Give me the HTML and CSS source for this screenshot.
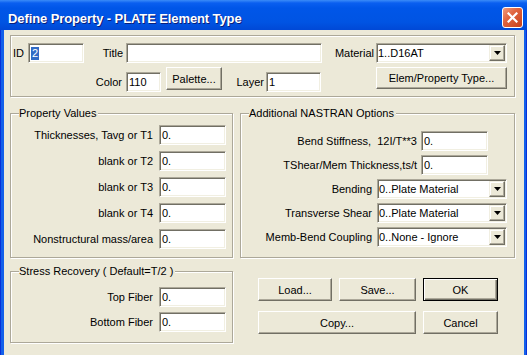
FILE: index.html
```html
<!DOCTYPE html>
<html lang="en">
<head>
    <meta charset="UTF-8">
    <title>Define Property - PLATE Element Type</title>
    <link rel="stylesheet" href="styles.css">
</head>
<body>
    <div class="window">
        <div class="titlebar">
            <span class="title">Define Property - PLATE Element Type</span>
            <span class="close">
                <svg width="11" height="11" viewBox="0 0 11 11">
                    <path d="M1.5 1.5 L9.5 9.5 M9.5 1.5 L1.5 9.5" stroke="#fff" stroke-width="2.2" stroke-linecap="square"/>
                </svg>
            </span>
        </div>

        <div class="client">
            <div class="group top-group">
                <div class="row">
                    <span class="lbl lbl-id">ID</span>
                    <div class="edit w-id"><span class="sel">2</span></div>
                    <span class="lbl lbl-title">Title</span>
                    <div class="edit w-title"></div>
                    <span class="lbl lbl-material">Material</span>
                    <div class="combo w-material">
                        <span class="combo-text">1..D16AT</span>
                        <span class="combo-btn"><svg width="7" height="4" viewBox="0 0 7 4"><path d="M0 0 H7 L3.5 4 Z" fill="#000"/></svg></span>
                    </div>
                </div>
                <div class="row row-2">
                    <span class="lbl lbl-color">Color</span>
                    <div class="edit w-color">110</div>
                    <button class="btn btn-palette">Palette...</button>
                    <span class="lbl lbl-layer">Layer</span>
                    <div class="edit w-layer">1</div>
                    <button class="btn btn-elem">Elem/Property Type...</button>
                </div>
            </div>

            <div class="middle">
                <div class="group props">
                    <span class="group-title">Property Values</span>
                    <div class="form-grid">
                        <span class="lbl">Thicknesses, Tavg or T1</span><div class="edit">0.</div>
                        <span class="lbl">blank or T2</span><div class="edit">0.</div>
                        <span class="lbl">blank or T3</span><div class="edit">0.</div>
                        <span class="lbl">blank or T4</span><div class="edit">0.</div>
                        <span class="lbl">Nonstructural mass/area</span><div class="edit">0.</div>
                    </div>
                </div>

                <div class="group nastran">
                    <span class="group-title">Additional NASTRAN Options</span>
                    <div class="opt-row opt-edit">
                        <span class="lbl">Bend Stiffness,&nbsp; 12I/T**3</span>
                        <div class="edit w-opt">0.</div>
                    </div>
                    <div class="opt-row opt-edit">
                        <span class="lbl">TShear/Mem Thickness,ts/t</span>
                        <div class="edit w-opt">0.</div>
                    </div>
                    <div class="opt-row">
                        <span class="lbl">Bending</span>
                        <div class="combo w-optcombo">
                            <span class="combo-text">0..Plate Material</span>
                            <span class="combo-btn"><svg width="7" height="4" viewBox="0 0 7 4"><path d="M0 0 H7 L3.5 4 Z" fill="#000"/></svg></span>
                        </div>
                    </div>
                    <div class="opt-row">
                        <span class="lbl">Transverse Shear</span>
                        <div class="combo w-optcombo">
                            <span class="combo-text">0..Plate Material</span>
                            <span class="combo-btn"><svg width="7" height="4" viewBox="0 0 7 4"><path d="M0 0 H7 L3.5 4 Z" fill="#000"/></svg></span>
                        </div>
                    </div>
                    <div class="opt-row">
                        <span class="lbl">Memb-Bend Coupling</span>
                        <div class="combo w-optcombo">
                            <span class="combo-text">0..None - Ignore</span>
                            <span class="combo-btn"><svg width="7" height="4" viewBox="0 0 7 4"><path d="M0 0 H7 L3.5 4 Z" fill="#000"/></svg></span>
                        </div>
                    </div>
                </div>
            </div>

            <div class="bottom">
                <div class="group stress">
                    <span class="group-title">Stress Recovery ( Default=T/2 )</span>
                    <div class="form-grid stress-grid">
                        <span class="lbl">Top Fiber</span><div class="edit">0.</div>
                        <span class="lbl">Bottom Fiber</span><div class="edit">0.</div>
                    </div>
                </div>

                <div class="buttons">
                    <button class="btn">Load...</button>
                    <button class="btn">Save...</button>
                    <button class="btn btn-default">OK</button>
                    <button class="btn btn-copy">Copy...</button>
                    <button class="btn">Cancel</button>
                </div>
            </div>
        </div>
    </div>
</body>
</html>
```

FILE: styles.css
```css
body {
    margin: 0;
    padding: 0;
    overflow: hidden;
}

.window {
    width: 527px;
    height: 355px;
    display: flex;
    flex-direction: column;
    background: #1360ea;
    box-shadow: inset 1px 0 #0831d9, inset -1px 0 #0831d9;
    overflow: hidden;
}

/* barra de titulo estilo XP */
.titlebar {
    height: 30px;
    flex-shrink: 0;
    display: flex;
    align-items: flex-start;
    justify-content: space-between;
    background: linear-gradient(to bottom, #3b8cf8 0, #0a5ff0 3px, #0056e8 8px, #0054e3 22px, #0048d6 30px);
}

.title {
    margin: 11px 0 0 8px;
    font-family: "Liberation Sans", Arial, sans-serif;
    font-size: 13px;
    font-weight: bold;
    line-height: 16px;
    letter-spacing: -0.1px;
    color: #fff;
    text-shadow: 1px 1px 0 #0a1e7a;
}

.close {
    box-sizing: border-box;
    width: 21px;
    height: 21px;
    margin: 7px 4px 0 0;
    display: flex;
    justify-content: center;
    align-items: center;
    border: 1px solid #fff;
    border-radius: 3px;
    background: linear-gradient(135deg, #f09b7d 0, #e0643f 40%, #c8401a 100%);
}

.client {
    flex: 1;
    margin: 0 3px 0 4px;
    padding-left: 6px;
    background: #ece9d8;
    font-family: "Liberation Sans", Arial, sans-serif;
    font-size: 11px;
    color: #000;
}

/* caixas de grupo com borda gravada */
.group {
    position: relative;
    box-sizing: border-box;
    border: 1px solid #aca899;
    box-shadow: inset 1px 1px 0 #fff, 1px 1px 0 #fff;
}

.group-title {
    position: absolute;
    top: -7px;
    left: 8px;
    padding: 0 2px 0 0;
    line-height: 13px;
    background: #ece9d8;
    white-space: nowrap;
}

.lbl {
    line-height: 20px;
    white-space: nowrap;
}

/* campos de texto */
.edit {
    box-sizing: border-box;
    height: 20px;
    padding-left: 2px;
    line-height: 18px;
    background: #fff;
    border: 1px solid;
    border-color: #aca899 #fff #fff #aca899;
    box-shadow: inset 1px 1px 0 #716f64, inset -1px -1px 0 #f1efe2;
    white-space: nowrap;
    overflow: hidden;
}

.sel {
    display: inline-block;
    padding: 0 1px;
    line-height: 13px;
    background: #316ac5;
    color: #fff;
}

.combo {
    box-sizing: border-box;
    height: 20px;
    display: flex;
    background: #fff;
    border: 1px solid;
    border-color: #aca899 #fff #fff #aca899;
    box-shadow: inset 1px 1px 0 #716f64, inset -1px -1px 0 #f1efe2;
}

.combo-text {
    flex: 1;
    padding-left: 1px;
    line-height: 18px;
    white-space: nowrap;
}

.combo-btn {
    box-sizing: border-box;
    width: 16px;
    height: 16px;
    margin: 1px;
    display: flex;
    justify-content: center;
    align-items: center;
    background: #ece9d8;
    border: 1px solid;
    border-color: #f1efe2 #716f64 #716f64 #f1efe2;
    box-shadow: inset -1px -1px 0 #aca899, inset 1px 1px 0 #fff;
}

/* botoes */
.btn {
    box-sizing: border-box;
    height: 23px;
    margin: 0;
    padding: 0;
    font-family: "Liberation Sans", Arial, sans-serif;
    font-size: 11px;
    color: #000;
    background: #ece9d8;
    border: 1px solid;
    border-color: #fff #716f64 #716f64 #fff;
    box-shadow: inset -1px -1px 0 #aca899;
}

.btn-default {
    border: 1px solid #000;
    box-shadow: inset 1px 1px 0 #fff, inset -1px -1px 0 #716f64, inset -2px -2px 0 #aca899;
}

/* grupo superior */
.top-group {
    width: 505px;
    height: 62px;
    margin-top: 5px;
    padding: 7px 0 0 2px;
}

.row {
    display: flex;
    align-items: flex-start;
}

.row-2 {
    margin-top: 4px;
}

.lbl-id { width: 15px; }
.w-id { width: 56px; }
.lbl-title { width: 42px; padding-right: 3px; box-sizing: border-box; text-align: right; }
.w-title { width: 196px; }
.lbl-material { width: 54px; padding-right: 2px; box-sizing: border-box; text-align: right; }
.w-material { width: 131px; }

.lbl-color { width: 113px; padding-right: 4px; box-sizing: border-box; text-align: right; margin-top: 5px; }
.w-color { width: 35px; margin-top: 5px; }
.btn-palette { width: 56px; margin-left: 5px; }
.lbl-layer { width: 44px; padding-right: 2px; box-sizing: border-box; text-align: right; margin-top: 5px; }
.w-layer { width: 55px; margin-top: 5px; }
.btn-elem { width: 131px; height: 22px; margin-left: 55px; }

/* linha do meio */
.middle {
    display: flex;
    margin-top: 16px;
}

.props {
    width: 223px;
    height: 145px;
    padding-top: 11px;
}

.form-grid {
    display: grid;
    grid-template-columns: 142px 67px;
    grid-auto-rows: 20px;
    column-gap: 6px;
    row-gap: 6px;
}

.form-grid .lbl {
    text-align: right;
}

.nastran {
    width: 275px;
    height: 145px;
    margin-left: 7px;
    padding: 17px 7px 0 0;
    display: flex;
    flex-direction: column;
    gap: 4px;
}

.opt-row {
    display: flex;
    justify-content: flex-end;
    align-items: center;
    gap: 5px;
}

.opt-edit {
    gap: 4px;
    padding-right: 19px;
}

.w-opt { width: 67px; }
.w-optcombo { width: 130px; }

/* linha de baixo */
.bottom {
    display: flex;
    align-items: flex-start;
    margin-top: 13px;
}

.stress {
    width: 223px;
    height: 72px;
    padding-top: 15px;
}

.stress-grid {
    row-gap: 5px;
}

.buttons {
    display: grid;
    grid-template-columns: 74px 77px 75px;
    grid-auto-rows: 23px;
    column-gap: 7px;
    row-gap: 10px;
    margin: 7px 0 0 25px;
}

.btn-copy {
    grid-column: span 2;
}
```
